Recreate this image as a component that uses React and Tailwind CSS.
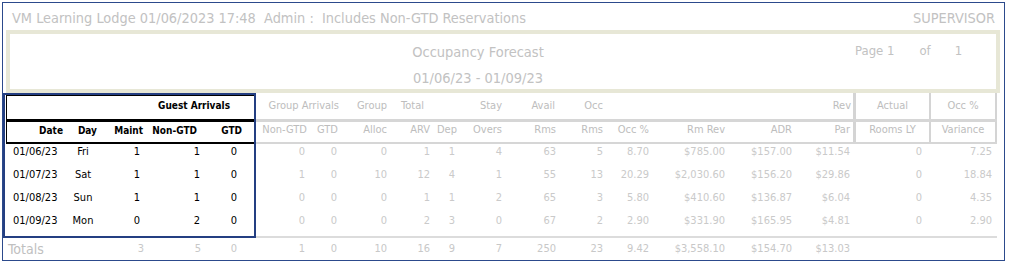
import React from "react";

const FONT = "[font-family:'DejaVu_Sans_Condensed','DejaVu_Sans',sans-serif] [font-stretch:condensed]";

const RC = [
  { w: "w-[55px]", h2: "Non-GTD", h2c: "text-right pr-[4px]", dc: "text-right pr-[6px]" },
  { w: "w-[34px]", h2: "GTD", h2c: "text-right pr-[7px]", dc: "text-right pr-[8px]" },
  { w: "w-[47px]", h2: "Alloc", h2c: "text-right pr-[5px]", dc: "text-right pr-[5px]" },
  { w: "w-[41px]", h2: "ARV", h2c: "text-right pr-[3px]", dc: "text-right pr-[3px]" },
  { w: "w-[27px]", h2: "Dep", h2c: "text-left pl-[4px]", dc: "text-right pr-[5px]" },
  { w: "w-[47px]", h2: "Overs", h2c: "text-right pr-[5px]", dc: "text-right pr-[5px]" },
  { w: "w-[53px]", h2: "Rms", h2c: "text-right pr-[4px]", dc: "text-right pr-[4px]" },
  { w: "w-[47px]", h2: "Rms", h2c: "text-right pr-[4px]", dc: "text-right pr-[4px]" },
  { w: "w-[46px]", h2: "Occ %", h2c: "text-right pr-[4px]", dc: "text-right pr-[4px]" },
  { w: "w-[76px]", h2: "Rm Rev", h2c: "text-right pr-[4px]", dc: "text-right pr-[4px]" },
  { w: "w-[67px]", h2: "ADR", h2c: "text-right pr-[4px]", dc: "text-right pr-[4px]" },
  { w: "w-[57px]", h2: "Par", h2c: "text-right pr-[3px]", dc: "text-right pr-[3px]" },
  { w: "w-[76px]", h2: "Rooms LY", h2c: "text-center border-l-[3px] border-[#d4d4d4]", dc: "text-right pr-[7px]" },
  { w: "w-[68px]", h2: "Variance", h2c: "text-center border-l-2 border-r-2 border-[#d4d4d4]", dc: "text-right pr-[5px]" },
];

const H1 = [
  { w: "w-[89px]", t: "Group Arrivals", c: "text-right pr-[6px]" },
  { w: "w-[47px]", t: "Group", c: "text-right pr-[5px]" },
  { w: "w-[41px]", t: "Total", c: "text-right pr-[9px]" },
  { w: "w-[27px]", t: "", c: "" },
  { w: "w-[47px]", t: "Stay", c: "text-right pr-[5px]" },
  { w: "w-[53px]", t: "Avail", c: "text-right pr-[5px]" },
  { w: "w-[47px]", t: "Occ", c: "text-right pr-[4px]" },
  { w: "w-[46px]", t: "", c: "" },
  { w: "w-[76px]", t: "", c: "" },
  { w: "w-[67px]", t: "", c: "" },
  { w: "w-[57px]", t: "Rev", c: "text-right pr-[2px]" },
  { w: "w-[76px]", t: "Actual", c: "text-center border-l-[3px] border-[#d4d4d4]" },
  { w: "w-[68px]", t: "Occ %", c: "text-center border-l-2 border-r-2 border-[#d4d4d4]" },
];

const RIGHT_ROWS = [
  ["0", "0", "0", "1", "1", "4", "63", "5", "8.70", "$785.00", "$157.00", "$11.54", "0", "7.25"],
  ["1", "0", "10", "12", "4", "1", "55", "13", "20.29", "$2,030.60", "$156.20", "$29.86", "0", "18.84"],
  ["0", "0", "0", "1", "1", "2", "65", "3", "5.80", "$410.60", "$136.87", "$6.04", "0", "4.35"],
  ["0", "0", "0", "2", "3", "0", "67", "2", "2.90", "$331.90", "$165.95", "$4.81", "0", "2.90"],
];
const RIGHT_TOTALS = ["1", "0", "10", "16", "9", "7", "250", "23", "9.42", "$3,558.10", "$154.70", "$13.03", "", ""];

const LEFT_ROWS = [
  ["01/06/23", "Fri", "1", "1", "0"],
  ["01/07/23", "Sat", "1", "1", "0"],
  ["01/08/23", "Sun", "1", "1", "0"],
  ["01/09/23", "Mon", "0", "2", "0"],
];

const LC = [
  { w: "w-[60px]", h: "Date", hc: "text-right pr-[4px]", dc: "text-left pl-[6px]" },
  { w: "w-[38px]", h: "Day", hc: "text-right pr-[8px]", dc: "text-center pr-[6px]" },
  { w: "w-[42px]", h: "Maint", hc: "text-right pr-[4px]", dc: "text-right pr-[7px]" },
  { w: "w-[56px]", h: "Non-GTD", hc: "text-right pr-[6px]", dc: "text-right pr-[3px]" },
  { w: "w-[51px]", h: "GTD", hc: "text-right pr-[12px]", dc: "text-right pr-[17px]" },
];

export default function App() {
  return (
    <div className={`w-[1009px] h-[266px] bg-white ${FONT}`}>
      <div className="ml-[2px] pt-[2px]">
        <div className="w-[1003px] h-[259px] border border-[#2c4a8c] flex flex-col">
          {/* top header */}
          <div className="h-[27px] pt-[4px] flex items-center justify-between pl-[9px] pr-[9px] text-[14.4px] text-[#c2c2c2] whitespace-pre">
            <span>VM Learning Lodge 01/06/2023 17:48  Admin :  Includes Non-GTD Reservations</span>
            <span>SUPERVISOR</span>
          </div>

          {/* title box */}
          <div className="ml-[3px] w-[994px] h-[63px] border-4 border-[#e7e7d6] grid text-[#c2c2c2]">
            <div className="[grid-area:1/1] w-[936px] pt-[8px] flex flex-col items-center gap-[6px] text-[14.5px] leading-[20px]">
              <span>Occupancy Forecast</span>
              <span>01/06/23 - 01/09/23</span>
            </div>
            <div className="[grid-area:1/1] ml-[845px] pt-[7px] text-[13px] leading-[20px] whitespace-pre flex">
              <span>Page 1</span>
              <span className="ml-[25px]">of</span>
              <span className="ml-[24px]">1</span>
            </div>
          </div>

          {/* table */}
          <div className="flex">
            {/* left highlighted block */}
            <div className="w-[253px] flex flex-col">
              <div className="h-[145px] border-2 border-[#243f82]">
                <div className="ml-[1px] border-l border-t border-black text-black">
                  <div className="h-[23px] pb-[4px] flex items-center text-[10px] font-bold">
                    <div className="w-[247px] text-right pr-[24px]">Guest Arrivals</div>
                  </div>
                  <div className="h-[3px] bg-black" />
                  <div className="h-[20px] pb-[3px] flex items-center text-[10px] font-bold">
                    {LC.map((c, i) => (
                      <div key={i} className={`shrink-0 ${c.w} ${c.hc}`}>{c.h}</div>
                    ))}
                  </div>
                  <div className="h-[2px] bg-black" />
                </div>
                <div className="pl-[2px] text-[11px] text-black">
                  {LEFT_ROWS.map((r, ri) => (
                    <div key={ri} className="h-[23px] pb-[6px] flex items-center whitespace-nowrap">
                      {LC.map((c, i) => (
                        <div key={i} className={`shrink-0 ${c.w} ${c.dc}`}>{r[i]}</div>
                      ))}
                    </div>
                  ))}
                </div>
              </div>
              <div className="h-[22px] pl-[4px] flex items-center">
                <div className="w-[98px] pl-[1px] text-[14px] text-[#c0c0c0]">Totals</div>
                <div className="w-[42px] text-right pr-[3px] text-[11px] text-[#c8c8c8]">3</div>
                <div className="w-[56px] text-right pr-[2px] text-[11px] text-[#c8c8c8]">5</div>
                <div className="w-[51px] text-right pr-[17px] text-[11px] text-[#c8c8c8]">0</div>
              </div>
            </div>

            {/* right faded block */}
            <div className="w-[748px] flex flex-col">
              <div className="h-[26px] flex items-stretch text-[11px] text-[#bdbdbd]">
                {H1.map((c, i) => (
                  <div key={i} className={`shrink-0 flex items-center ${c.w} ${c.c}`}>
                    <span className="w-full">{c.t}</span>
                  </div>
                ))}
              </div>
              <div className="h-[3px] w-[741px] bg-[#d6d6d6]" />
              <div className="h-[20px] flex items-stretch text-[11px] text-[#bdbdbd]">
                {RC.map((c, i) => (
                  <div key={i} className={`shrink-0 flex items-center pb-[3px] ${c.w} ${c.h2c}`}>
                    <span className="w-full">{c.h2}</span>
                  </div>
                ))}
              </div>
              <div className="h-[2px] w-[741px] bg-[#d6d6d6]" />
              <div className="h-[92px] text-[11px] text-[#cacaca]">
                {RIGHT_ROWS.map((r, ri) => (
                  <div key={ri} className="h-[23px] pb-[6px] flex items-center whitespace-nowrap">
                    {RC.map((c, i) => (
                      <div key={i} className={`shrink-0 ${c.w} ${c.dc}`}>{r[i]}</div>
                    ))}
                  </div>
                ))}
              </div>
              <div className="h-[2px] w-[741px] bg-[#dcdcdc]" />
              <div className="h-[22px] flex items-center whitespace-nowrap text-[11px] text-[#c8c8c8]">
                {RC.map((c, i) => (
                  <div key={i} className={`shrink-0 ${c.w} ${c.dc}`}>{RIGHT_TOTALS[i]}</div>
                ))}
              </div>
            </div>
          </div>
        </div>
      </div>
    </div>
  );
}
